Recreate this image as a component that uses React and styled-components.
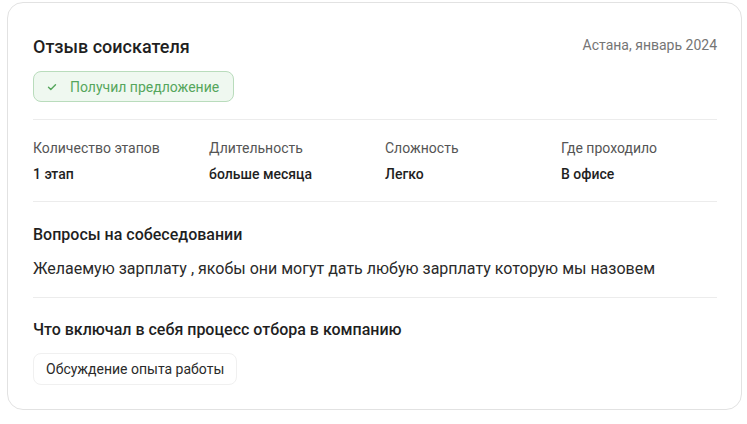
import styled, { createGlobalStyle } from "styled-components";

const GlobalStyle = createGlobalStyle`
  body {
    margin: 0;
    background: #ffffff;
    font-family: Roboto, "Noto Sans", sans-serif;
    color: #222;
  }
`;

const Page = styled.div`
  padding: 2px 5px 0 7px;
`;

const Card = styled.div`
  box-sizing: border-box;
  width: 735px;
  padding: 32px 24px 24px 25px;
  border: 1px solid #e2e2e2;
  border-radius: 16px;
  background: #fff;
`;

const Header = styled.div`
  display: flex;
  justify-content: space-between;
  align-items: flex-start;
`;

const Title = styled.h2`
  margin: 0;
  font-size: 18px;
  line-height: 24px;
  font-weight: 500;
  color: #1f1f1f;
`;

const Meta = styled.span`
  font-size: 14px;
  line-height: 20px;
  color: #757575;
`;

const Badge = styled.div`
  display: inline-flex;
  align-items: center;
  gap: 12px;
  box-sizing: border-box;
  height: 31px;
  margin-top: 12px;
  padding: 0 14px 0 12px;
  border: 1px solid #b9dcbc;
  border-radius: 8px;
  background: #eff8f0;
  color: #55a65c;
  font-size: 14px;
`;

const Divider = styled.div`
  height: 1px;
  background: #ececec;
`;

const Top = styled.div`
  padding-bottom: 17px;
`;

const Stats = styled.div`
  display: grid;
  grid-template-columns: repeat(4, 1fr);
  column-gap: 20px;
  padding: 18px 0 17px;
`;

const Stat = styled.div`
  display: flex;
  flex-direction: column;
  gap: 6px;
`;

const Label = styled.span`
  font-size: 14px;
  line-height: 20px;
  color: #555;
`;

const Value = styled.span`
  font-size: 14px;
  line-height: 20px;
  font-weight: 500;
  color: #1f1f1f;
`;

const Section = styled.div`
  display: flex;
  flex-direction: column;
  align-items: flex-start;
  gap: ${(p) => p.gap}px;
  padding: ${(p) => p.top}px 0 ${(p) => p.bottom}px;
`;

const SectionTitle = styled.h3`
  margin: 0;
  font-size: 16px;
  line-height: 22px;
  font-weight: 500;
  color: #1f1f1f;
`;

const Text = styled.p`
  margin: 0;
  font-size: 16px;
  line-height: 24px;
  color: #2a2a2a;
`;

const Chip = styled.div`
  box-sizing: border-box;
  height: 32px;
  display: inline-flex;
  align-items: center;
  padding: 0 12px;
  border: 1px solid #f0f0f0;
  border-radius: 8px;
  font-size: 14px;
  color: #2a2a2a;
`;

const stats = [
  ["Количество этапов", "1 этап"],
  ["Длительность", "больше месяца"],
  ["Сложность", "Легко"],
  ["Где проходило", "В офисе"],
];

export default function App() {
  return (
    <Page>
      <GlobalStyle />
      <Card>
        <Top>
          <Header>
            <Title>Отзыв соискателя</Title>
            <Meta>Астана, январь 2024</Meta>
          </Header>
          <Badge>
            <svg width="12" height="12" viewBox="0 0 12 12" fill="none">
              <path d="M2.5 6.2l2.3 2.3 4.7-4.8" stroke="#55a65c" strokeWidth="1.4" strokeLinecap="round" strokeLinejoin="round" />
            </svg>
            Получил предложение
          </Badge>
        </Top>
        <Divider />
        <Stats>
          {stats.map(([l, v]) => (
            <Stat key={l}>
              <Label>{l}</Label>
              <Value>{v}</Value>
            </Stat>
          ))}
        </Stats>
        <Divider />
        <Section top={22} bottom={16} gap={11}>
          <SectionTitle>Вопросы на собеседовании</SectionTitle>
          <Text>Желаемую зарплату , якобы они могут дать любую зарплату которую мы назовем</Text>
        </Section>
        <Divider />
        <Section top={21} bottom={0} gap={12}>
          <SectionTitle>Что включал в себя процесс отбора в компанию</SectionTitle>
          <Chip>Обсуждение опыта работы</Chip>
        </Section>
      </Card>
    </Page>
  );
}
